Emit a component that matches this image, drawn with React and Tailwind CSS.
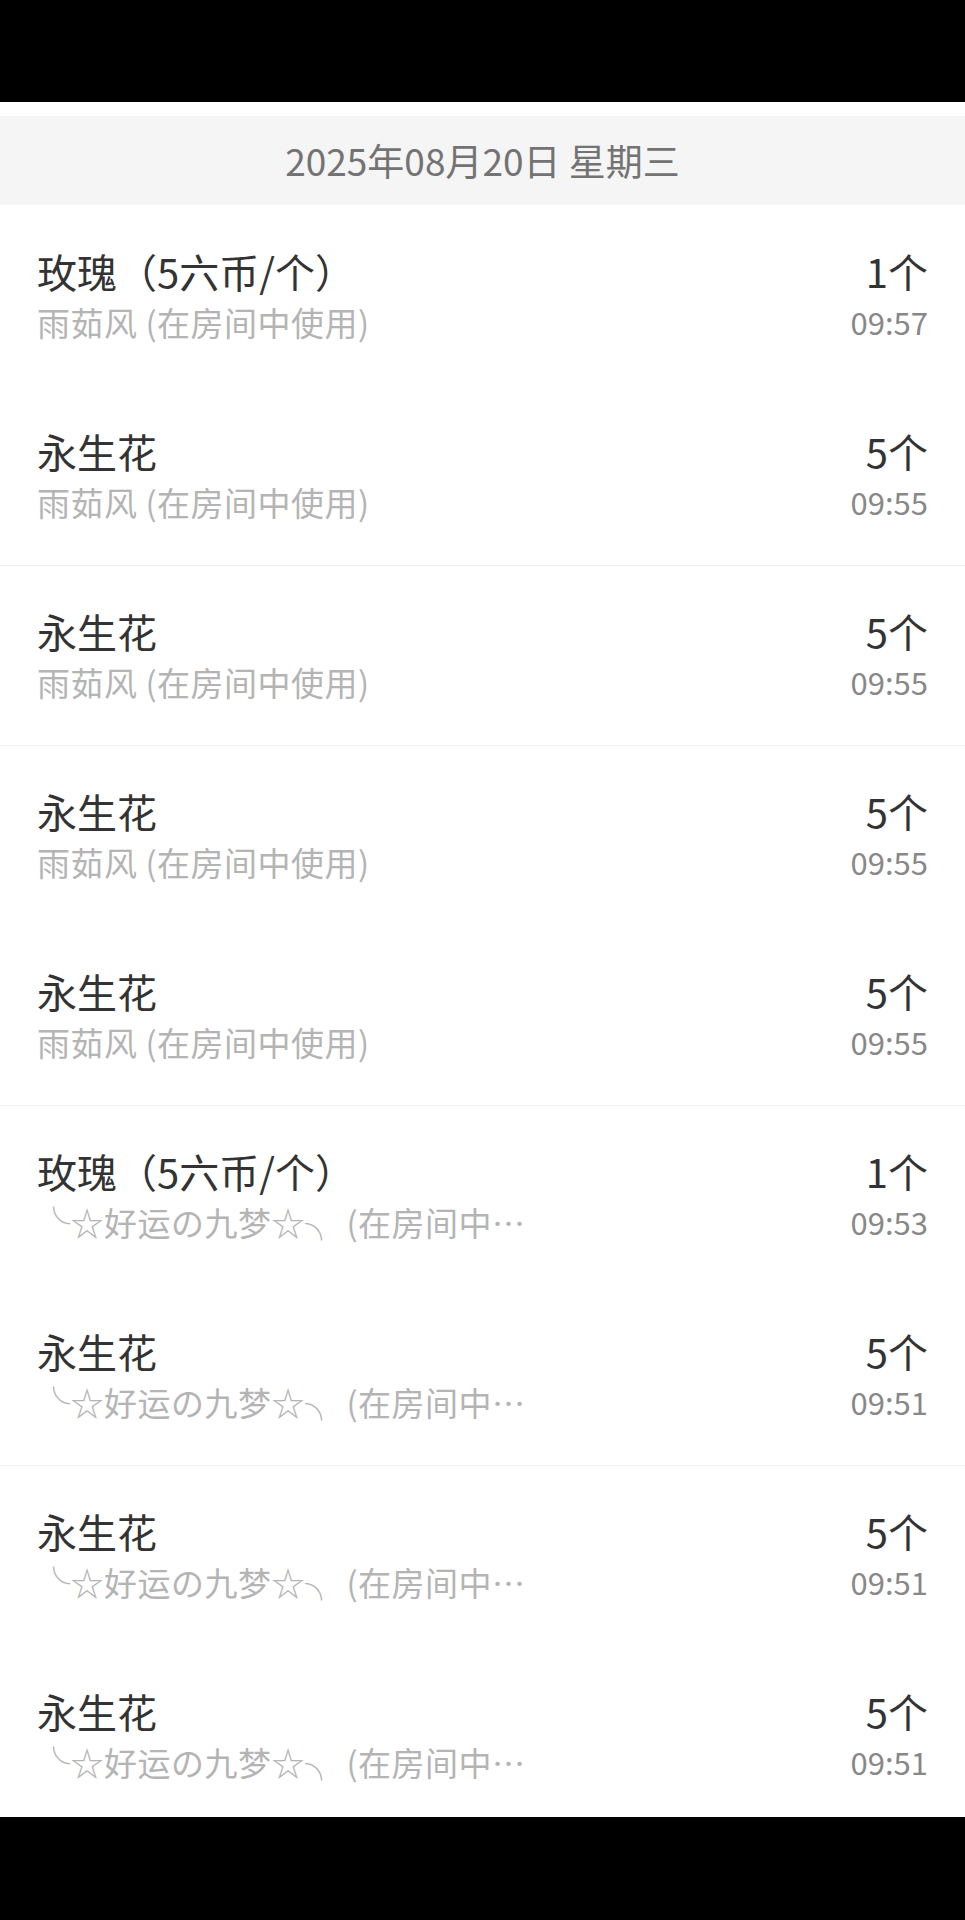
import React from "react";

const rows = [
  { t: "玫瑰（5六币/个）", s: "雨茹风 (在房间中使用)", c: "1个", time: "09:57", line: false },
  { t: "永生花", s: "雨茹风 (在房间中使用)", c: "5个", time: "09:55", line: false },
  { t: "永生花", s: "雨茹风 (在房间中使用)", c: "5个", time: "09:55", line: true },
  { t: "永生花", s: "雨茹风 (在房间中使用)", c: "5个", time: "09:55", line: true },
  { t: "永生花", s: "雨茹风 (在房间中使用)", c: "5个", time: "09:55", line: false },
  { t: "玫瑰（5六币/个）", s: "╰☆好运の九梦☆╮ (在房间中…", c: "1个", time: "09:53", line: true },
  { t: "永生花", s: "╰☆好运の九梦☆╮ (在房间中…", c: "5个", time: "09:51", line: false },
  { t: "永生花", s: "╰☆好运の九梦☆╮ (在房间中…", c: "5个", time: "09:51", line: true },
  { t: "永生花", s: "╰☆好运の九梦☆╮ (在房间中…", c: "5个", time: "09:51", line: false },
];

export default function App() {
  return (
    <div
      className="relative w-[965px] h-[1920px] overflow-hidden bg-white"
      style={{ fontFamily: '"Noto Sans CJK SC", "Noto Sans", sans-serif' }}
    >
      <div className="h-[102px] bg-black" />
      <div className="h-[14px] bg-white" />
      <div className="h-[89px] bg-[#f5f5f5] flex items-center justify-center text-[37px] text-[#737373]">
        2025年08月20日 星期三
      </div>
      <div className="flex flex-col">
        {rows.map((r, i) => (
          <div
            key={i}
            className={
              "h-[180px] shrink-0 flex justify-between px-[37px] pt-[39px] " +
              (r.line ? "border-t border-[#efefef]" : "border-t border-transparent")
            }
          >
            <div className="flex flex-col">
              <div className="text-[40px] leading-[52px] text-[#333333]">{r.t}</div>
              <div className="text-[33px] leading-[50px] text-[#b4b4b4] tracking-[0.5px]">{r.s}</div>
            </div>
            <div className="flex flex-col items-end">
              <div className="text-[40px] leading-[52px] text-[#333333]">{r.c}</div>
              <div className="text-[31px] leading-[50px] text-[#888888]">{r.time}</div>
            </div>
          </div>
        ))}
      </div>
      <div className="absolute left-0 right-0 bottom-0 h-[103px] bg-black" />
    </div>
  );
}
